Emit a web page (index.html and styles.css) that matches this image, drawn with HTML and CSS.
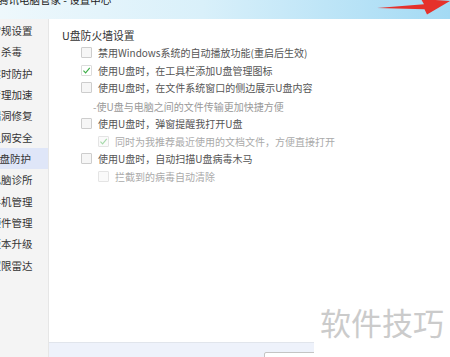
FILE: index.html
```html
<!DOCTYPE html>
<html lang="zh-CN">
<head>
    <meta charset="UTF-8">
    <meta name="viewport" content="width=device-width, initial-scale=1.0">
    <title>腾讯电脑管家 - 设置中心</title>
    <link rel="stylesheet" href="styles.css">
</head>
<body>

<div class="titlebar">
    <span class="title">腾讯电脑管家 - 设置中心</span>
</div>

<div class="main">
    <ul class="sidebar">
        <li><span>常规设置</span></li>
        <li><span>杀毒</span></li>
        <li><span>实时防护</span></li>
        <li><span>清理加速</span></li>
        <li><span>漏洞修复</span></li>
        <li><span>上网安全</span></li>
        <li class="active"><span>U盘防护</span></li>
        <li><span>电脑诊所</span></li>
        <li><span>手机管理</span></li>
        <li><span>硬件管理</span></li>
        <li><span>版本升级</span></li>
        <li><span>权限雷达</span></li>
    </ul>

    <div class="panel">
        <div class="content">
            <h2>U盘防火墙设置</h2>
            <div class="options">
                <div class="option"><i class="box"></i>禁用Windows系统的自动播放功能(重启后生效)</div>
                <div class="option"><i class="box checked"><svg viewBox="0 0 10 10"><path d="M1.6 5.2 L4 7.6 L8.6 2.2"/></svg></i>使用U盘时，在工具栏添加U盘管理图标</div>
                <div class="option"><i class="box"></i>使用U盘时，在文件系统窗口的侧边展示U盘内容</div>
                <div class="note">-使U盘与电脑之间的文件传输更加快捷方便</div>
                <div class="option"><i class="box"></i>使用U盘时，弹窗提醒我打开U盘</div>
                <div class="option sub disabled"><i class="box checked"><svg viewBox="0 0 10 10"><path d="M1.6 5.2 L4 7.6 L8.6 2.2"/></svg></i>同时为我推荐最近使用的文档文件，方便直接打开</div>
                <div class="option"><i class="box"></i>使用U盘时，自动扫描U盘病毒木马</div>
                <div class="option sub disabled"><i class="box"></i>拦截到的病毒自动清除</div>
            </div>
        </div>
        <div class="footer">
            <button class="btn"></button>
        </div>
    </div>
</div>

<!-- red annotation arrow over the title bar -->
<svg class="arrow" width="450" height="20" viewBox="0 0 450 20">
    <polygon points="377,8 424,4.2 421,-1 450,1 427,14.5 424.5,9.3" fill="#e5312b"/>
</svg>

<div class="watermark">软件技巧</div>

</body>
</html>
```

FILE: styles.css
```css
body {
    margin: 0;
    width: 450px;
    height: 357px;
    overflow: hidden;
    position: relative;
    font-family: "Noto Sans CJK SC", "Microsoft YaHei", sans-serif;
    color: #333;
    background: #fff;
}

.titlebar {
    height: 19px;
    overflow: hidden;
    background: linear-gradient(90deg, #eef8fc 0%, #d9f0fa 45%, #a3daf4 100%);
}

.title {
    display: block;
    margin: -7px 0 0 -2px;
    font-size: 10.5px;
    line-height: 13px;
    color: #222;
    white-space: nowrap;
}

.main {
    display: flex;
    height: 338px;
}

.sidebar {
    list-style: none;
    margin: 0;
    padding: 1px 0 0;
    width: 48px;
    background: #f4f4f4;
    border-right: 1px solid #e6e6e6;
}

.sidebar li {
    height: 21.33px;
    width: 23px;
    padding-right: 25px;
    display: flex;
    justify-content: center;
    align-items: center;
    font-size: 10.5px;
    white-space: nowrap;
    color: #333;
}

.sidebar li.active {
    background: #dfe6f8;
}

.panel {
    flex: 1;
    display: flex;
    flex-direction: column;
}

.content {
    flex: 1;
    padding: 7px 0 0 13px;
}

.content h2 {
    margin: 0;
    font-size: 10.8px;
    font-weight: normal;
    line-height: 18px;
    color: #333;
}

.options {
    padding: 0 0 0 19px;
}

.option {
    display: flex;
    align-items: center;
    height: 17.5px;
    font-size: 10px;
    color: #555;
    white-space: nowrap;
}

.option.sub {
    padding-left: 17px;
}

.option.disabled {
    color: #aaa;
}

.note {
    height: 17.5px;
    line-height: 17.5px;
    margin-top: 1px;
    padding-left: 12px;
    font-size: 10px;
    color: #999;
    white-space: nowrap;
}

.box {
    width: 9px;
    height: 9px;
    margin-right: 6px;
    border: 1px solid #cdcdcd;
    background: #f6f6f6;
    border-radius: 1px;
    flex-shrink: 0;
    display: flex;
}

.box svg {
    width: 9px;
    height: 9px;
    fill: none;
    stroke: #3fae49;
    stroke-width: 1.3;
}

.box.checked {
    background: #fff;
    border-color: #dcdcdc;
}

.disabled .box {
    border-color: #e4e4e4;
    background: #fafafa;
}

.disabled .box svg {
    stroke: #a6d9aa;
}

.footer {
    height: 14px;
    border-top: 1px solid #e1e5ec;
    background: #eef2fb;
    overflow: hidden;
}

.btn {
    display: block;
    margin: 9px 0 0 215px;
    width: 60px;
    height: 20px;
    padding: 0;
    border: 1px solid #c4c4c4;
    border-radius: 2px;
    background: #fff;
}

.arrow {
    position: absolute;
    left: 0;
    top: 0;
}

.watermark {
    position: absolute;
    left: 314px;
    top: 302px;
    right: 0;
    bottom: 0;
    padding-left: 6px;
    background: #fff;
    font-size: 31px;
    line-height: 40px;
    color: #cbcbcb;
    white-space: nowrap;
}
```
